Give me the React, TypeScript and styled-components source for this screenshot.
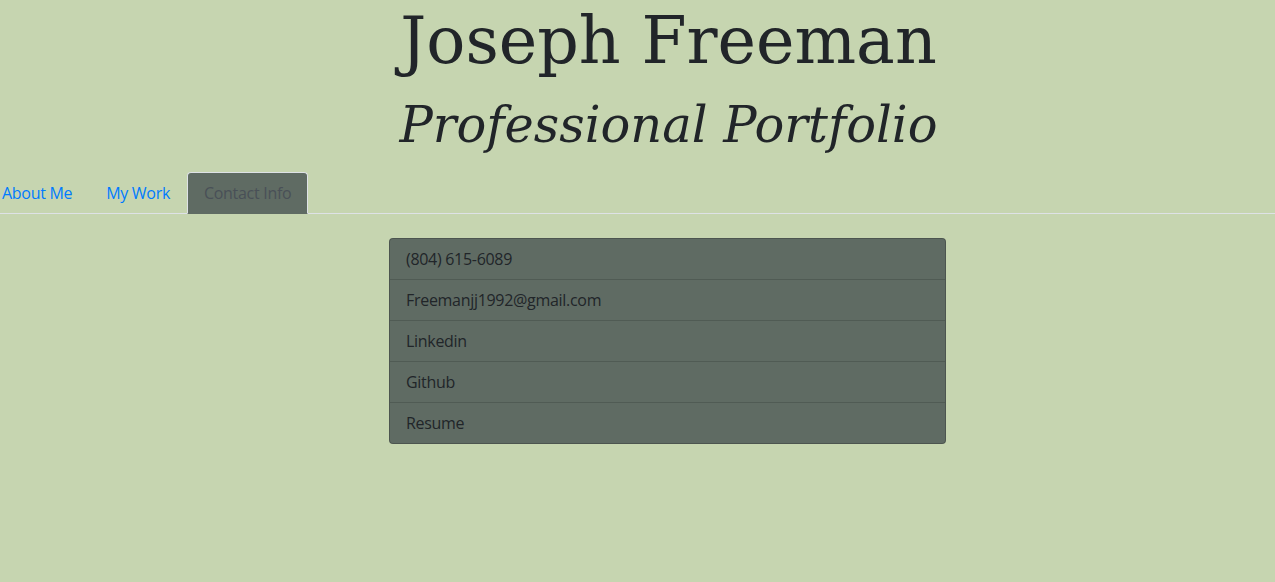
import React from "react";
import styled, { createGlobalStyle } from "styled-components";

const Global = createGlobalStyle`
  html, body { margin: 0; padding: 0; }
  body {
    background: #c6d5b0;
    font-family: "Open Sans", "Noto Sans", sans-serif;
    font-size: 16px;
    line-height: 1.5;
    letter-spacing: -0.3px;
    color: #212529;
    min-height: 582px;
  }
`;

const Header = styled.header`
  display: flex;
  flex-direction: column;
  align-items: center;
  padding-left: 62px;
  height: 172px;
`;

const Title = styled.h1`
  margin: 0;
  font-family: "DejaVu Serif", serif;
  font-weight: 400;
  font-size: 65px;
  line-height: 82px;
  letter-spacing: 0;
  color: #212529;
`;

const Subtitle = styled.h2`
  margin: 0;
  font-family: "DejaVu Serif", serif;
  font-style: italic;
  font-weight: 400;
  font-size: 49.5px;
  line-height: 86px;
  letter-spacing: 0;
  color: #212529;
`;

const Tabs = styled.nav`
  display: flex;
  border-bottom: 1px solid #dee2e6;
`;

const Tab = styled.a<{ $active?: boolean; $first?: boolean }>`
  display: block;
  padding: 8px 16px;
  margin-bottom: -1px;
  margin-left: ${(p) => (p.$first ? "-15px" : "0")};
  border: 1px solid ${(p) => (p.$active ? "#dee2e6" : "transparent")};
  border-bottom-color: ${(p) => (p.$active ? "#5f6b63" : "transparent")};
  border-top-left-radius: 4px;
  border-top-right-radius: 4px;
  background: ${(p) => (p.$active ? "#5f6b63" : "transparent")};
  color: ${(p) => (p.$active ? "#495057" : "#007bff")};
  text-decoration: none;
  cursor: pointer;
`;

const Main = styled.main`
  display: flex;
  justify-content: center;
  padding: 24px 0 0 60px;
`;

const List = styled.ul`
  list-style: none;
  margin: 0;
  padding: 0;
  box-sizing: border-box;
  width: 557px;
  border: 1px solid rgba(0, 0, 0, 0.2);
  border-radius: 4px;
  background: #5f6b63;
  overflow: hidden;
`;

const Item = styled.li`
  padding: 8px 16px;
  color: #212529;
  & + & {
    border-top: 1px solid rgba(0, 0, 0, 0.15);
  }
`;

export default function App() {
  const items = [
    "(804) 615-6089",
    "Freemanjj1992@gmail.com",
    "Linkedin",
    "Github",
    "Resume",
  ];
  return (
    <>
      <Global />
      <Header>
        <Title>Joseph Freeman</Title>
        <Subtitle>Professional Portfolio</Subtitle>
      </Header>
      <Tabs>
        <Tab $first>About Me</Tab>
        <Tab>My Work</Tab>
        <Tab $active>Contact Info</Tab>
      </Tabs>
      <Main>
        <List>
          {items.map((t) => (
            <Item key={t}>{t}</Item>
          ))}
        </List>
      </Main>
    </>
  );
}
